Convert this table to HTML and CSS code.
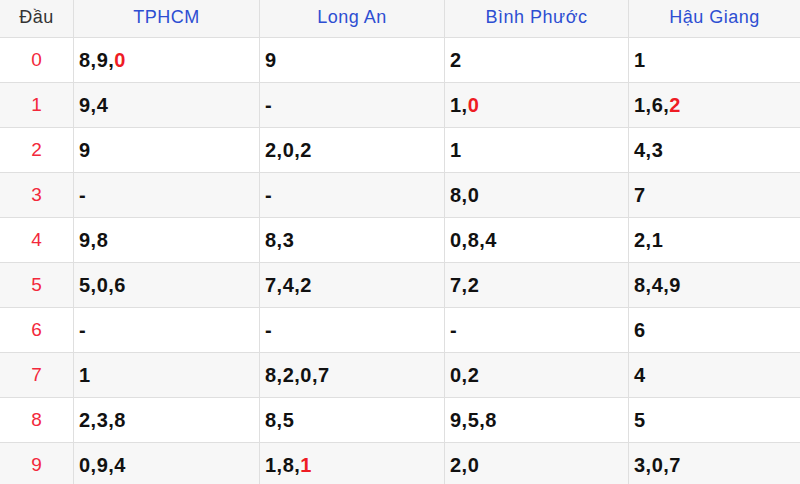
FILE: index.html
```html
<!DOCTYPE html>
<html lang="vi">
<head>
<meta charset="utf-8">
<link rel="stylesheet" href="styles.css">
</head>
<body>
<div class="grid">
  <div class="cell head first">Đầu</div>
  <div class="cell head">TPHCM</div>
  <div class="cell head">Long An</div>
  <div class="cell head">Bình Phước</div>
  <div class="cell head">Hậu Giang</div>

  <div class="cell key">0</div>
  <div class="cell val">8,9,<span class="hot">0</span></div>
  <div class="cell val">9</div>
  <div class="cell val">2</div>
  <div class="cell val">1</div>

  <div class="cell key alt">1</div>
  <div class="cell val alt">9,4</div>
  <div class="cell val alt">-</div>
  <div class="cell val alt">1,<span class="hot">0</span></div>
  <div class="cell val alt">1,6,<span class="hot">2</span></div>

  <div class="cell key">2</div>
  <div class="cell val">9</div>
  <div class="cell val">2,0,2</div>
  <div class="cell val">1</div>
  <div class="cell val">4,3</div>

  <div class="cell key alt">3</div>
  <div class="cell val alt">-</div>
  <div class="cell val alt">-</div>
  <div class="cell val alt">8,0</div>
  <div class="cell val alt">7</div>

  <div class="cell key">4</div>
  <div class="cell val">9,8</div>
  <div class="cell val">8,3</div>
  <div class="cell val">0,8,4</div>
  <div class="cell val">2,1</div>

  <div class="cell key alt">5</div>
  <div class="cell val alt">5,0,6</div>
  <div class="cell val alt">7,4,2</div>
  <div class="cell val alt">7,2</div>
  <div class="cell val alt">8,4,9</div>

  <div class="cell key">6</div>
  <div class="cell val">-</div>
  <div class="cell val">-</div>
  <div class="cell val">-</div>
  <div class="cell val">6</div>

  <div class="cell key alt">7</div>
  <div class="cell val alt">1</div>
  <div class="cell val alt">8,2,0,7</div>
  <div class="cell val alt">0,2</div>
  <div class="cell val alt">4</div>

  <div class="cell key">8</div>
  <div class="cell val">2,3,8</div>
  <div class="cell val">8,5</div>
  <div class="cell val">9,5,8</div>
  <div class="cell val">5</div>

  <div class="cell key alt">9</div>
  <div class="cell val alt">0,9,4</div>
  <div class="cell val alt">1,8,<span class="hot">1</span></div>
  <div class="cell val alt">2,0</div>
  <div class="cell val alt">3,0,7</div>
</div>
</body>
</html>
```
FILE: styles.css
```css
html, body {
  margin: 0;
  padding: 0;
  background: #ffffff;
}
body {
  font-family: "Liberation Sans", Arial, sans-serif;
  overflow: hidden;
}
.grid {
  display: grid;
  grid-template-columns: 74px 186px 185px 184px 1fr;
  grid-auto-rows: 45px;
  grid-template-rows: 38px;
}
.cell {
  display: flex;
  align-items: center;
  border-right: 1px solid #dfdfdf;
  border-bottom: 1px solid #dfdfdf;
  box-sizing: border-box;
  background: #ffffff;
}
.cell:nth-child(5n) {
  border-right: none;
}
.alt {
  background: #f7f7f7;
}
.head {
  background: #f6f6f6;
  justify-content: center;
  color: #2d4ed2;
  font-size: 18px;
  letter-spacing: 0.5px;
  padding-bottom: 3px;
}
.head.first {
  color: #333333;
}
.key {
  justify-content: center;
  color: #f3283b;
  font-size: 19px;
}
.val {
  padding-left: 5px;
  font-weight: bold;
  font-size: 20px;
  letter-spacing: 0.5px;
  color: #111111;
}
.hot {
  color: #ee1c24;
}
```
